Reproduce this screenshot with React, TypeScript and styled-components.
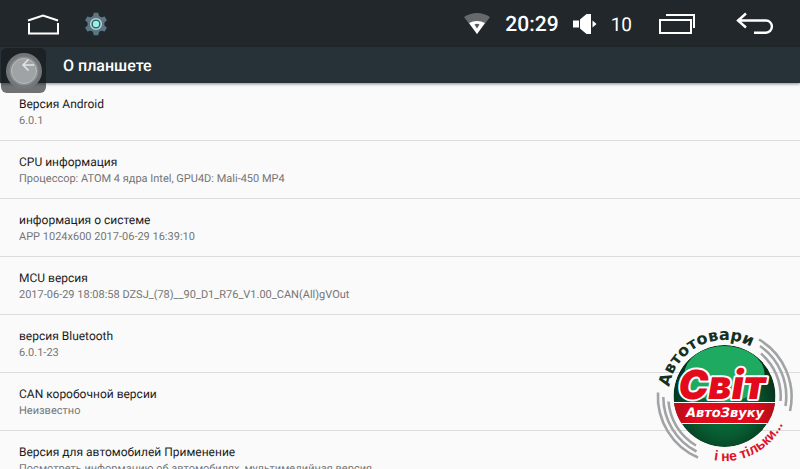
import React from "react";
import styled, { createGlobalStyle } from "styled-components";

const GlobalStyle = createGlobalStyle`
  * { box-sizing: border-box; }
  html, body, #root { height: 100%; }
  body {
    margin: 0;
    overflow: hidden;
    background: #fafafa;
    font-family: Roboto, "Noto Sans", sans-serif;
    text-rendering: geometricPrecision;
  }
`;

const Screen = styled.div`
  position: relative;
  display: flex;
  flex-direction: column;
  height: 100%;
  overflow: hidden;
`;

const StatusBar = styled.header`
  display: flex;
  flex: none;
  align-items: center;
  justify-content: space-between;
  height: 47px;
  padding: 0 26px;
  background: #22272b;
  color: #fff;
`;

const StatusGroup = styled.div<{ $gap: number }>`
  display: flex;
  align-items: center;
  gap: ${(p) => p.$gap}px;
`;

const IconButton = styled.button`
  display: flex;
  padding: 0;
  border: 0;
  background: none;
  color: #fff;
  cursor: pointer;
`;

const Clock = styled.time`
  padding-top: 2px;
  font-size: 21px;
  font-weight: 500;
  line-height: 24px;
`;

const Volume = styled.span`
  padding-top: 2px;
  font-size: 19px;
  line-height: 24px;
`;

const AppBar = styled.div`
  position: relative;
  z-index: 1;
  display: flex;
  flex: none;
  align-items: center;
  gap: 27px;
  height: 36px;
  padding-left: 20px;
  background: #263238;
  box-shadow: 0 1px 3px rgba(0, 0, 0, 0.45);
`;

const BackButton = styled(IconButton)`
  position: relative;
  z-index: 2;
`;

const PageTitle = styled.h1`
  margin: 0;
  padding-top: 2px;
  color: #fff;
  font-size: 16px;
  font-weight: 500;
  line-height: 20px;
`;

const TouchButton = styled.button`
  position: absolute;
  top: 1px;
  left: 1px;
  display: flex;
  align-items: center;
  justify-content: center;
  width: 45px;
  height: 45px;
  padding: 0;
  border: 0;
  border-radius: 6px;
  background: rgba(20, 22, 23, 0.6);
`;

const List = styled.ul`
  flex: 1;
  min-height: 0;
  margin: 0;
  padding: 0;
  overflow: hidden;
  list-style: none;
`;

const Item = styled.li`
  height: 58px;
  padding: 13px 19px 0;
  border-bottom: 1px solid #dcdcdc;
`;

const ItemTitle = styled.div`
  color: #1c1c1c;
  font-size: 12px;
  line-height: 17px;
`;

const ItemSummary = styled.div`
  color: #757575;
  font-size: 11px;
  line-height: 16px;
`;

const ShopLogo = styled.svg`
  position: absolute;
  right: 0;
  bottom: 0;
  width: 150px;
  height: 149px;
`;

const HomeIcon = () => (
  <svg width="34" height="22" viewBox="0 0 34 22" fill="none" stroke="currentColor" strokeWidth="2">
    <path d="M2 7.500 17 2.500l15 5M3 10v10.500h29V10" />
  </svg>
);

const GearIcon = () => (
  <svg width="24" height="24" viewBox="-12 -12 24 24">
    <g fill="#5b7684">
      {[0, 60, 120].map((a) => (
        <path key={a} transform={`rotate(${a})`} d="M-2.200-11.300h4.400l1 4h-6.400zM-2.200 11.300h4.400l1-4h-6.400z" />
      ))}
      <circle r="8.500" />
    </g>
    <circle r="5.300" fill="#34505a" stroke="#b8d4da" strokeWidth="1.600" />
    <circle r="3.200" fill="#8ff5e4" />
  </svg>
);

const WifiIcon = () => (
  <svg width="28" height="24" viewBox="0 0 28 24">
    <path d="M1 5Q14-3 27 5L14 22Z" fill="#666a6d" />
    <path d="M6 11Q14 7 22 11L14 22Z" fill="#fff" />
    <path d="M11.500 12.500Q14 11 16.500 12.500L14 16.500Z" fill="#55595c" />
  </svg>
);

const SpeakerIcon = () => (
  <svg width="24" height="22" viewBox="0 0 24 22" fill="currentColor">
    <path d="M0 7.500h6v7H0zM7 6.500 13.500 1h4.500v20h-4.500l-6.500-5.500zM19.500 7.500 23.500 11l-4 3.500z" />
  </svg>
);

const RecentsIcon = () => (
  <svg width="38" height="22" viewBox="0 0 38 22" fill="none" stroke="currentColor" strokeWidth="2">
    <path d="M2 7h31v13H2zM8 2h28v13" />
  </svg>
);

const ReturnIcon = () => (
  <svg width="38" height="24" viewBox="0 0 38 24" fill="none" stroke="currentColor" strokeWidth="2.400">
    <path d="M10 1.500 2 8.500l8 7M3 8.500h27a5.800 6 0 0 1 0 12.200H18" />
  </svg>
);

const ArrowIcon = () => (
  <svg width="16" height="14" viewBox="0 0 16 14" fill="none" stroke="#e2e4e5" strokeWidth="1.500">
    <path d="M8.500 1.500 3 7l5.500 5.500M3 7h11" />
  </svg>
);

const TouchIcon = () => (
  <svg width="38" height="38" viewBox="-19 -19 38 38">
    <circle r="18" fill="#727678" />
    <circle r="14.500" fill="#888c8e" />
    <circle r="12.500" fill="#a0a3a5" stroke="#b9bcbd" />
  </svg>
);

const Logo = () => (
  <ShopLogo viewBox="0 0 150 149" role="img" aria-label="Автотовари Світ АвтоЗвуку і не тільки...">
    <defs>
      <radialGradient id="globe" cx="50%" cy="60%" r="58%">
        <stop offset="0" stopColor="#087a3e" />
        <stop offset="0.500" stopColor="#075c31" />
        <stop offset="1" stopColor="#062b19" />
      </radialGradient>
      <linearGradient id="band" x1="0" x2="1">
        <stop offset="0" stopColor="#b30d17" />
        <stop offset="0.250" stopColor="#e30a1c" />
        <stop offset="0.750" stopColor="#e30a1c" />
        <stop offset="1" stopColor="#a80e17" />
      </linearGradient>
      <clipPath id="disc"><circle cx="74.500" cy="76" r="51" /></clipPath>
      <path id="upper" d="M18.500 76a56 56 0 0 1 112 0" />
      <path id="lower" d="M9.500 76a65 65 0 0 0 130 0" />
    </defs>
    <g fill="none" stroke="#a2a3a5" strokeWidth="2.600">
      <path d="M109 19.500A66.500 66.500 0 0 1 140 91" />
      <path d="M110 26A61.500 61.500 0 0 1 135.500 86" />
      <path d="M111 33.500A56 56 0 0 1 130.500 81" />
      <path d="M8 72.500A66.500 66.500 0 0 0 48 137.500" />
      <path d="M13.300 77A61.500 61.500 0 0 0 46.500 131.500" />
      <path d="M18.500 81.500A56 56 0 0 0 46 125.500" />
    </g>
    <g clipPath="url(#disc)">
      <circle cx="74.500" cy="76" r="51" fill="url(#globe)" />
      <ellipse cx="74.500" cy="54" rx="40" ry="28" fill="#1faa62" />
      <path d="M20 82.500h110v21H20z" fill="url(#band)" stroke="#fff" strokeWidth="1.200" />
    </g>
    <g fontFamily="'DejaVu Sans', sans-serif" fontWeight="700">
      <text
        x="72"
        y="79"
        textAnchor="middle"
        fontFamily="Inter, sans-serif"
        fontSize="40"
        fontWeight="900"
        fontStyle="italic"
        fill="#e30a1c"
        stroke="#fff"
        strokeWidth="4"
        strokeLinejoin="round"
        paintOrder="stroke"
      >
        Світ
      </text>
      <text x="75" y="97" textAnchor="middle" fontSize="13" fontStyle="italic" fill="#fff">
        АвтоЗвуку
      </text>
      <text fontSize="16" fill="#16301f">
        <textPath href="#upper" startOffset="9">Автотовари</textPath>
      </text>
      <text fontSize="14" fill="#dc1428" fontFamily="'Liberation Sans', sans-serif">
        <textPath href="#lower" startOffset="91">і не тільки...</textPath>
      </text>
    </g>
  </ShopLogo>
);

const items = [
  { title: "Версия Android", summary: "6.0.1" },
  { title: "CPU информация", summary: "Процессор: ATOM 4 ядра Intel, GPU4D: Mali-450 MP4" },
  { title: "информация о системе", summary: "APP 1024x600 2017-06-29 16:39:10" },
  { title: "MCU версия", summary: "2017-06-29 18:08:58 DZSJ_(78)__90_D1_R76_V1.00_CAN(All)gVOut" },
  { title: "версия Bluetooth", summary: "6.0.1-23" },
  { title: "CAN коробочной версии", summary: "Неизвестно" },
  {
    title: "Версия для автомобилей Применение",
    summary: "Посмотреть информацию об автомобилях, мультимедийная версия",
  },
];

export default function App() {
  return (
    <Screen>
      <GlobalStyle />
      <StatusBar>
        <StatusGroup $gap={24}>
          <IconButton aria-label="Домой"><HomeIcon /></IconButton>
          <IconButton aria-label="Настройки"><GearIcon /></IconButton>
        </StatusGroup>
        <StatusGroup $gap={26}>
          <StatusGroup $gap={14}>
            <WifiIcon />
            <Clock>20:29</Clock>
            <SpeakerIcon />
            <Volume>10</Volume>
          </StatusGroup>
          <StatusGroup $gap={40}>
            <IconButton aria-label="Недавние"><RecentsIcon /></IconButton>
            <IconButton aria-label="Назад"><ReturnIcon /></IconButton>
          </StatusGroup>
        </StatusGroup>
      </StatusBar>
      <AppBar>
        <TouchButton aria-label="Быстрое меню"><TouchIcon /></TouchButton>
        <BackButton aria-label="Вернуться"><ArrowIcon /></BackButton>
        <PageTitle>О планшете</PageTitle>
      </AppBar>
      <List>
        {items.map((item) => (
          <Item key={item.title}>
            <ItemTitle>{item.title}</ItemTitle>
            <ItemSummary>{item.summary}</ItemSummary>
          </Item>
        ))}
      </List>
      <Logo />
    </Screen>
  );
}
